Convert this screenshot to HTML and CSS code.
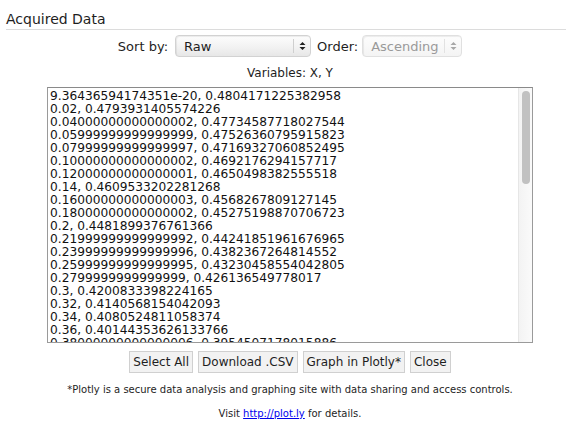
FILE: index.html
```html
<!DOCTYPE html>
<html>
<head>
<meta charset="utf-8">
<link rel="stylesheet" href="styles.css">
</head>
<body>
<div class="header">Acquired Data</div>
<div class="content">
  <div class="sort-row">
    <span class="label">Sort by:</span>
    <div class="select select-raw">
      <span class="select-text">Raw</span>
      <span class="select-arrows">
        <svg width="7" height="10" viewBox="0 0 7 10"><path d="M3.5 1 L6.5 4 L0.5 4 Z M3.5 9 L6.5 6 L0.5 6 Z" fill="#222"/></svg>
      </span>
    </div>
    <span class="label label-order">Order:</span>
    <div class="select select-order disabled">
      <span class="select-text">Ascending</span>
      <span class="select-arrows">
        <svg width="7" height="10" viewBox="0 0 7 10"><path d="M3.5 1 L6.5 4 L0.5 4 Z M3.5 9 L6.5 6 L0.5 6 Z" fill="#a8a8a8"/></svg>
      </span>
    </div>
  </div>
  <div class="variables">Variables: X, Y</div>
  <div class="textarea">
    <div class="lines">9.36436594174351e-20, 0.4804171225382958
0.02, 0.4793931405574226
0.04000000000000002, 0.47734587718027544
0.05999999999999999, 0.47526360795915823
0.07999999999999997, 0.47169327060852495
0.10000000000000002, 0.4692176294157717
0.12000000000000001, 0.4650498382555518
0.14, 0.4609533202281268
0.16000000000000003, 0.4568267809127145
0.18000000000000002, 0.45275198870706723
0.2, 0.4481899376761366
0.21999999999999992, 0.44241851961676965
0.23999999999999996, 0.4382367264814552
0.25999999999999995, 0.43230458554042805
0.2799999999999999, 0.426136549778017
0.3, 0.4200833398224165
0.32, 0.4140568154042093
0.34, 0.4080524811058374
0.36, 0.40144353626133766
0.38000000000000006, 0.3954507178015886</div>
    <div class="scrollbar"><div class="thumb"></div></div>
  </div>
  <div class="buttons">
    <button class="btn">Select All</button>
    <button class="btn">Download .CSV</button>
    <button class="btn">Graph in Plotly*</button>
    <button class="btn">Close</button>
  </div>
  <p class="note">*Plotly is a secure data analysis and graphing site with data sharing and access controls.</p>
  <p class="note visit">Visit <a href="#">http://plot.ly</a> for details.</p>
</div>
</body>
</html>
```
FILE: styles.css
```css
html, body {
  margin: 0;
  padding: 0;
  background: #fff;
}
body {
  font-family: "DejaVu Sans", Verdana, sans-serif;
  color: #1e1e1e;
  width: 572px;
  height: 438px;
  overflow: hidden;
}
.header {
  margin: 0 6px;
  padding: 11px 0 1px 0;
  font-size: 14px;
  line-height: 17px;
  border-bottom: 1px solid #dcdcdc;
}
.content {
  padding-left: 8px;
}
.sort-row {
  margin-top: 5px;
  display: flex;
  justify-content: center;
  align-items: center;
  height: 22px;
  font-size: 13px;
}
.label {
  margin-right: 7px;
}
.label-order {
  margin-left: 6px;
  margin-right: 4px;
}
.select {
  box-sizing: border-box;
  height: 22px;
  display: flex;
  align-items: center;
  border: 1px solid #d2d2d2;
  border-radius: 4px;
  background: linear-gradient(to bottom, #fdfdfd 0%, #f1f1f1 60%, #e7e7e7 100%);
  box-shadow: inset 1px 1px 1px rgba(0,0,0,0.07);
}
.select-raw {
  width: 136px;
}
.select-order {
  width: 100px;
}
.select-text {
  flex: 1;
  padding-left: 8px;
  font-size: 13px;
}
.select-arrows {
  width: 16px;
  height: 14px;
  border-left: 1px solid #cfcfcf;
  display: flex;
  align-items: center;
  justify-content: center;
}
.select-arrows svg {
  display: block;
}
.disabled {
  border-color: #e0e0e0;
  background: linear-gradient(to bottom, #fdfdfd 0%, #f4f4f4 100%);
}
.disabled .select-text {
  color: #9a9a9a;
}
.disabled .select-arrows {
  border-left-color: #e2e2e2;
}
.variables {
  margin-top: 8px;
  text-align: center;
  font-size: 12px;
  line-height: 16px;
}
.textarea {
  box-sizing: border-box;
  margin: 6px auto 0 auto;
  width: 486px;
  height: 256px;
  border: 1px solid #9a9a9a;
  border-top-color: #8a8a8a;
  display: flex;
  overflow: hidden;
  background: #fff;
}
.lines {
  flex: 1;
  height: 254px;
  box-sizing: border-box;
  padding: 2px 0 0 2px;
  white-space: pre;
  font-size: 12.2px;
  line-height: 13px;
  overflow: hidden;
  color: #111;
}
.scrollbar {
  width: 14px;
  box-sizing: border-box;
  border-left: 1px solid #e6e6e6;
  background: linear-gradient(to right, #f3f3f3, #fafafa);
  padding: 3px 2px 0 3px;
}
.thumb {
  width: 8px;
  height: 93px;
  border-radius: 4px;
  background: #c1c1c1;
}
.buttons {
  margin-top: 8px;
  display: flex;
  justify-content: center;
  gap: 5px;
}
.btn {
  box-sizing: border-box;
  height: 22px;
  padding: 0 3px;
  font-family: "DejaVu Sans", Verdana, sans-serif;
  font-size: 12px;
  color: #1e1e1e;
  background: #f2f2f2;
  border: 1px solid #d0d0d0;
  border-radius: 0;
}
.note {
  margin: 10px 0 0 0;
  text-align: center;
  font-size: 10px;
  line-height: 14px;
}
.visit a {
  color: #0000ee;
  text-decoration: underline;
}
```
